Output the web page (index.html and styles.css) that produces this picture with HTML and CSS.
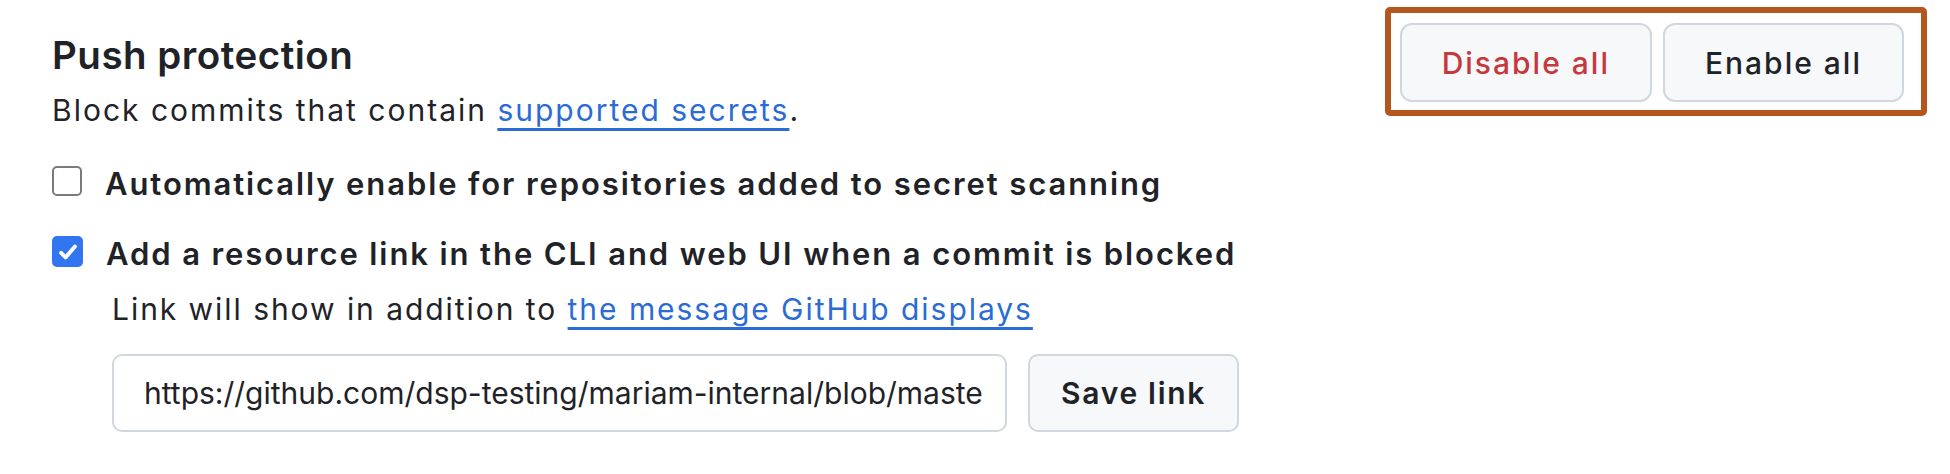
FILE: index.html
```html
<!DOCTYPE html>
<html lang="en">
<head>
<meta charset="utf-8">
<title>Push protection</title>
<link rel="stylesheet" href="styles.css">
</head>
<body>
<div class="page">
  <div class="settings">
    <h2 class="title">Push protection</h2>
    <p class="desc">Block commits that contain <a class="link" href="#">supported secrets</a>.</p>
    <div class="option option-first">
      <span class="box"></span>
      <span class="label">Automatically enable for repositories added to secret scanning</span>
    </div>
    <div class="option option-second">
      <span class="box box-checked"><svg viewBox="0 0 16 16" width="24" height="24"><path d="M3.4 8.6 6.4 11.6 12.6 4.4" fill="none" stroke="#fff" stroke-width="2.6" stroke-linecap="round" stroke-linejoin="round"/></svg></span>
      <span class="label">Add a resource link in the CLI and web UI when a commit is blocked</span>
    </div>
    <p class="note">Link will show in addition to <a class="link" href="#">the message GitHub displays</a></p>
    <div class="link-form">
      <div class="field">https://github.com/dsp-testing/mariam-internal/blob/maste</div>
      <button class="btn btn-save">Save link</button>
    </div>
  </div>
  <div class="highlight">
    <button class="btn btn-danger">Disable all</button>
    <button class="btn btn-default">Enable all</button>
  </div>
</div>
</body>
</html>
```

FILE: styles.css
```css
* { box-sizing: border-box; }
html, body { margin: 0; padding: 0; background: #ffffff; }
body {
  font-family: Inter, "Liberation Sans", sans-serif;
  color: #1f2328;
  width: 1950px;
  height: 474px;
  overflow: hidden;
}
.page {
  display: flex;
  justify-content: space-between;
  align-items: flex-start;
  padding: 7px 23px 0 52px;
}
.settings {
  display: flex;
  flex-direction: column;
  padding-top: 24px;
}
.title {
  margin: 0;
  font-size: 38.5px;
  line-height: 48px;
  font-weight: 600;
  letter-spacing: 0.5px;
}
.desc {
  margin: 9px 0 0;
  font-size: 30px;
  line-height: 44px;
  letter-spacing: 2px;
}
.link {
  color: #2b6bd6;
  text-decoration: underline;
  text-decoration-thickness: 3px;
  text-underline-offset: 7px;
}
.option {
  display: flex;
  align-items: flex-start;
  gap: 23px;
}
.option-first { margin-top: 30px; }
.option-second { margin-top: 26px; }
.label {
  font-size: 31px;
  line-height: 44px;
  font-weight: 600;
  letter-spacing: 1.9px;
}
.box {
  width: 30px;
  height: 30px;
  margin-top: 4px;
  flex: none;
  border: 2px solid #7b7b7b;
  border-radius: 5px;
  background: #fff;
  display: flex;
  align-items: center;
  justify-content: center;
}
.box-checked {
  border: none;
  width: 31px;
  height: 31px;
  background: #3176f0;
}
.note {
  margin: 11px 0 0 60px;
  font-size: 30px;
  line-height: 44px;
  letter-spacing: 1.95px;
}
.link-form {
  display: flex;
  gap: 21px;
  margin: 23px 0 0 60px;
}
.field {
  width: 895px;
  height: 78px;
  border: 2px solid #d0d7de;
  border-radius: 10px;
  padding: 0 30px;
  display: flex;
  align-items: center;
  font-size: 30px;
  overflow: hidden;
  white-space: nowrap;
}
.btn {
  font-family: inherit;
  height: 79px;
  border: 2px solid #d0d7de;
  border-radius: 12px;
  background: #f6f8fa;
  font-size: 30px;
  font-weight: 500;
  letter-spacing: 2px;
  color: #1f2328;
  padding: 0 40px;
}
.btn-save {
  height: 78px;
  padding: 0 31px;
  font-weight: 600;
  letter-spacing: 1.7px;
  border-radius: 10px;
}
.btn-danger { color: #c5383c; }
.highlight {
  display: flex;
  gap: 11px;
  border: 6px solid #b4561d;
  border-radius: 5px;
  padding: 10px 17px 8px 9px;
}
```
